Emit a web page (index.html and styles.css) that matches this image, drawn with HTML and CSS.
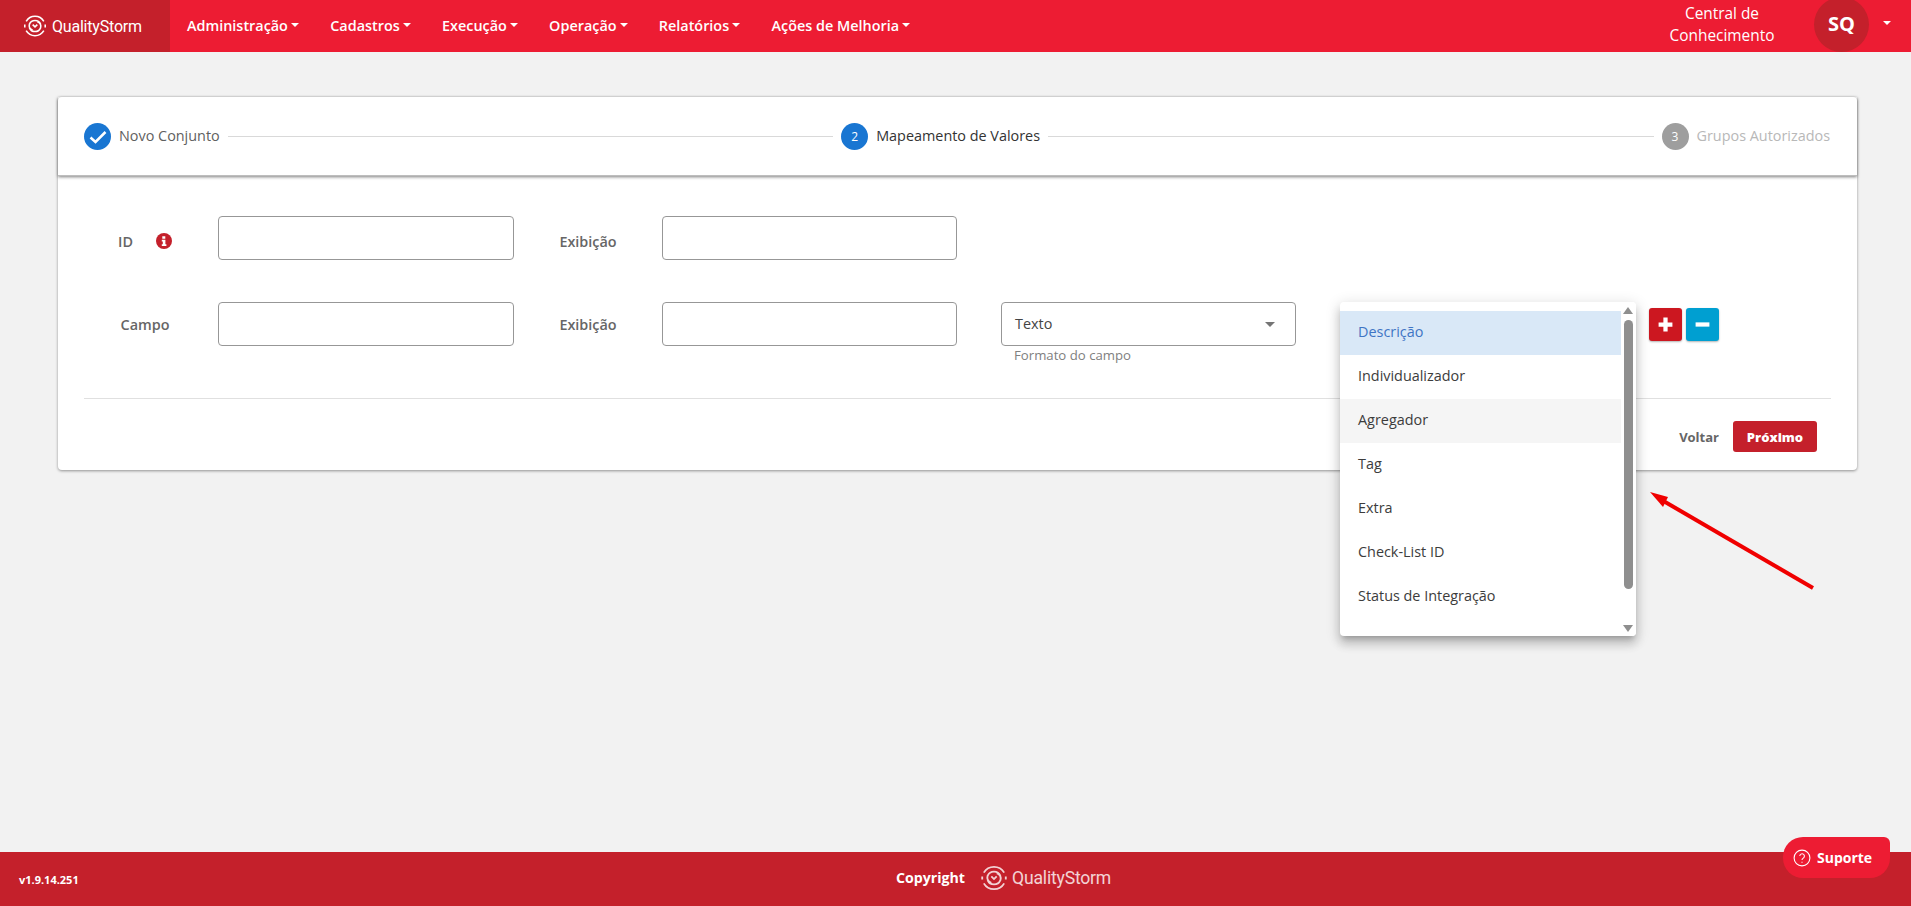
FILE: index.html
```html
<!DOCTYPE html>
<html lang="pt-BR">
<head>
<meta charset="utf-8">
<title>QualityStorm</title>
<link rel="stylesheet" href="styles.css">
</head>
<body>
<header class="topbar">
  <a class="brand">
    <svg class="logo-mark" viewBox="0 0 28 28" aria-hidden="true">
      <path d="M4.500 9A11 11 0 0 1 23.500 9M23.500 19A11 11 0 0 1 4.500 19M3 12.500v3M25 12.500v3"/>
      <path d="M20 12A6.500 6.500 0 0 0 8 12c-.8 3 .8 5.500 3.500 6.500M8 16a6.500 6.500 0 0 0 12 0c.8-3-.8-5.500-3.500-6.500"/>
      <path d="M11.500 12.500l2.500 2.500 2.500-2.500"/>
    </svg>
    <span class="logo-text">QualityStorm</span>
  </a>
  <nav class="menu">
    <a class="menu-item">Administração<i class="caret"></i></a>
    <a class="menu-item">Cadastros<i class="caret"></i></a>
    <a class="menu-item">Execução<i class="caret"></i></a>
    <a class="menu-item">Operação<i class="caret"></i></a>
    <a class="menu-item">Relatórios<i class="caret"></i></a>
    <a class="menu-item">Ações de Melhoria<i class="caret"></i></a>
  </nav>
  <div class="top-right">
    <a class="knowledge">Central de<br>Conhecimento</a>
    <div class="avatar">SQ</div>
    <i class="caret user-caret"></i>
  </div>
</header>

<main class="content">
  <section class="card">
    <div class="stepper">
      <div class="step">
        <span class="dot dot-active">
          <svg class="check" viewBox="0 0 18 18" aria-hidden="true"><path d="M1.500 9.500l5 4.500L16.500 4"/></svg>
        </span>
        <span class="step-label">Novo Conjunto</span>
      </div>
      <div class="step-line"></div>
      <div class="step">
        <span class="dot dot-active">2</span>
        <span class="step-label step-current">Mapeamento de Valores</span>
      </div>
      <div class="step-line"></div>
      <div class="step">
        <span class="dot dot-off">3</span>
        <span class="step-label step-disabled">Grupos Autorizados</span>
      </div>
    </div>

    <div class="form-area">
      <div class="form-row form-row-one">
        <div class="label label-first">ID
          <svg class="info" viewBox="0 0 16 16" aria-hidden="true">
            <circle cx="8" cy="8" r="8"/>
            <path class="info-i" d="M6.300 3.300h3v2.400h-3zM5.800 6.800h3.600v4.400h1v1.700H5.800v-1.700h1V8.500h-1z"/>
          </svg>
        </div>
        <input class="text-input input-wide" type="text">
        <div class="label label-second">Exibição</div>
        <input class="text-input" type="text">
      </div>

      <div class="form-row form-row-two">
        <div class="label label-first">Campo</div>
        <input class="text-input input-wide" type="text">
        <div class="label label-second">Exibição</div>
        <input class="text-input" type="text">
        <div class="select-wrap">
          <div class="select-box">
            <span class="select-value">Texto</span>
            <i class="select-arrow"></i>
          </div>
          <div class="hint">Formato do campo</div>
        </div>
        <div class="select-host">
          <div class="panel">
            <ul class="options">
              <li class="option option-selected">Descrição</li>
              <li class="option">Individualizador</li>
              <li class="option option-hover">Agregador</li>
              <li class="option">Tag</li>
              <li class="option">Extra</li>
              <li class="option">Check-List ID</li>
              <li class="option">Status de Integração</li>
              <li class="option">Valor</li>
            </ul>
            <div class="scrollbar">
              <i class="sb-up"></i>
              <div class="sb-thumb"></div>
              <i class="sb-down"></i>
            </div>
          </div>
        </div>
        <div class="row-actions">
          <button class="square-btn btn-add" type="button" aria-label="Adicionar">
            <svg viewBox="0 0 16 16" aria-hidden="true"><path d="M6 1.500h4V6h4.500v4H10v4.500H6V10H1.500V6H6z"/></svg>
          </button>
          <button class="square-btn btn-remove" type="button" aria-label="Remover">
            <svg viewBox="0 0 16 16" aria-hidden="true"><path d="M1.500 6h13v4h-13z"/></svg>
          </button>
        </div>
      </div>

      <hr class="divider">

      <div class="actions">
        <button class="link-btn" type="button">Voltar</button>
        <button class="primary-btn" type="button">Próximo</button>
      </div>
    </div>
  </section>
</main>

<footer class="footer">
  <span class="version">v1.9.14.251</span>
  <div class="copyright">
    <span>Copyright</span>
    <svg class="logo-mark foot-mark" viewBox="0 0 28 28" aria-hidden="true">
      <path d="M4.500 9A11 11 0 0 1 23.500 9M23.500 19A11 11 0 0 1 4.500 19M3 12.500v3M25 12.500v3"/>
      <path d="M20 12A6.500 6.500 0 0 0 8 12c-.8 3 .8 5.500 3.500 6.500M8 16a6.500 6.500 0 0 0 12 0c.8-3-.8-5.500-3.500-6.500"/>
      <path d="M11.500 12.500l2.500 2.500 2.500-2.500"/>
    </svg>
    <span class="logo-text foot-logo">QualityStorm</span>
  </div>
</footer>

<a class="support">
  <svg viewBox="0 0 18 18" aria-hidden="true">
    <circle cx="9" cy="9" r="7.900"/>
    <path d="M6.800 7.100a2.300 2.300 0 1 1 3.500 2c-.8.500-1.300 1-1.300 2"/>
    <path d="M9 12.800v1"/>
  </svg>
  Suporte
</a>

<svg class="annotation" viewBox="0 0 180 110" aria-hidden="true">
  <path class="annotation-line" d="M165 98 12 9"/>
  <path class="annotation-head" d="M2 2 20 7 15 17z"/>
</svg>
</body>
</html>
```

FILE: styles.css
```css
* { box-sizing: border-box; }

html, body { height: 100%; }

body {
  margin: 0;
  display: flex;
  flex-direction: column;
  background: #f2f2f2;
  color: #555;
  font-family: "Open Sans", "Noto Sans", sans-serif;
  font-size: 14.4px;
  overflow: hidden;
}

/* top bar */
.topbar {
  flex: 0 0 52px;
  height: 52px;
  display: flex;
  align-items: stretch;
  background: #ed1c33;
  color: #fff;
  overflow: hidden;
}

.brand {
  flex: 0 0 170px;
  display: flex;
  align-items: center;
  gap: 4px;
  padding-left: 22px;
  background: #c4202b;
}

.logo-mark {
  width: 26px;
  height: 26px;
  fill: none;
  stroke: #fff;
  stroke-width: 1.700;
  flex: none;
}

.logo-text {
  font-family: Roboto, "Open Sans", sans-serif;
  font-weight: 400;
  font-size: 16px;
  letter-spacing: -.2px;
  color: #fff;
  white-space: nowrap;
}

.menu {
  display: flex;
  align-items: center;
  padding-left: 17px;
  gap: 31.300px;
}

.menu-item {
  display: flex;
  align-items: center;
  font-weight: 600;
  font-size: 14.4px;
  color: #fff;
  white-space: nowrap;
  position: relative;
  top: -1px;
}

.caret {
  display: inline-block;
  width: 0;
  height: 0;
  margin-left: 3px;
  border-top: 4px solid #fff;
  border-left: 4px solid transparent;
  border-right: 4px solid transparent;
}

.top-right {
  margin-left: auto;
  display: flex;
  align-items: center;
}

.knowledge {
  width: 120px;
  text-align: center;
  font-size: 15.400px;
  line-height: 22px;
  color: #fff;
  margin-right: 32px;
  position: relative;
  top: -1px;
}

.avatar {
  width: 55px;
  height: 55px;
  align-self: flex-start;
  margin-top: -3px;
  padding-bottom: 2px;
  border-radius: 50%;
  background: #c4202b;
  color: #fff;
  font-weight: 700;
  font-size: 20px;
  display: flex;
  align-items: center;
  justify-content: center;
}

.user-caret {
  margin-left: 14px;
  margin-right: 20px;
  position: relative;
  top: -3px;
}

/* page */
.content {
  flex: 1 1 auto;
  padding: 45px 54px 0 58px;
}

.card {
  height: 373px;
  background: #fff;
  border-radius: 4px;
  box-shadow: 0 1px 3px rgba(0, 0, 0, .4);
}

.stepper {
  height: 79px;
  display: flex;
  align-items: center;
  padding: 1px 27px 0 26px;
  gap: 8px;
  box-shadow: 0 1px 3px rgba(0, 0, 0, .5);
  border-bottom: 1px solid #bdbdbd;
  position: relative;
}

.step {
  display: flex;
  align-items: center;
  gap: 8px;
  white-space: nowrap;
}

.dot {
  width: 27px;
  height: 27px;
  border-radius: 50%;
  display: flex;
  align-items: center;
  justify-content: center;
  color: #fff;
  font-size: 12px;
}

.dot-active { background: #1976d2; }
.dot-off { background: #9e9e9e; }

.check {
  width: 18px;
  height: 18px;
  fill: none;
  stroke: #fff;
  stroke-width: 2.500;
}

.step-label { color: #5f5f5f; font-size: 14.4px; padding-bottom: 2px; }
.step-current { color: #333; }
.step-disabled { color: #b8b8b8; }

.step-line {
  flex: 1 1 auto;
  height: 1px;
  background: #d9d9d9;
}

.form-area {
  padding: 40px 26px 0;
}

.form-row {
  display: flex;
  align-items: flex-start;
}

.form-row-one .label { padding-top: 7px; }
.form-row-two { margin-top: 42px; }

.label {
  height: 44px;
  display: flex;
  align-items: center;
  justify-content: center;
  font-weight: 600;
  font-size: 14.4px;
  color: #666;
}

.label-first { width: 122px; margin-right: 12px; }
.label-second { width: 148px; }

.info {
  width: 16px;
  height: 16px;
  margin-left: 23px;
  margin-top: -2px;
  fill: #c4202b;
}

.info-i { fill: #fff; }

.text-input {
  width: 295px;
  height: 44px;
  padding: 0 13px;
  border: 1px solid #979797;
  border-radius: 4px;
  background: #fff;
  font: inherit;
}

.input-wide { width: 296px; }

.select-wrap { width: 295px; margin-left: 44px; }

.select-box {
  height: 44px;
  display: flex;
  align-items: center;
  justify-content: space-between;
  padding: 0 20px 0 13px;
  border: 1px solid #979797;
  border-radius: 4px;
  font-size: 14.4px;
  color: #444;
}

.select-value { padding-bottom: 2px; }

.select-arrow {
  width: 0;
  height: 0;
  border-top: 5px solid #757575;
  border-left: 5px solid transparent;
  border-right: 5px solid transparent;
}

.hint {
  margin: 1px 0 0 13px;
  font-size: 13.200px;
  line-height: 16px;
  color: #808080;
}

/* open dropdown */
.select-host {
  width: 296px;
  margin-left: 44px;
  position: relative;
  height: 44px;
}

.panel {
  position: absolute;
  top: 0;
  left: 0;
  z-index: 5;
  width: 296px;
  height: 334px;
  display: flex;
  background: #fff;
  border-radius: 4px;
  overflow: hidden;
  box-shadow: 0 5px 5px -3px rgba(0, 0, 0, .2), 0 8px 10px 1px rgba(0, 0, 0, .14), 0 3px 14px 2px rgba(0, 0, 0, .12);
}

.options {
  flex: 1 1 auto;
  margin: 0;
  padding: 9px 0 0;
  list-style: none;
}

.option {
  height: 44px;
  line-height: 42px;
  padding-left: 18px;
  font-size: 14.4px;
  color: #3c3c3c;
}

.option:last-child { line-height: 46px; }

.option-selected { background: #d9e8f7; color: #3f75c4; }
.option-hover { background: #f5f5f5; }

.scrollbar {
  flex: 0 0 15px;
  display: flex;
  flex-direction: column;
  align-items: center;
  padding: 5px 3px 4px 2px;
  background: #fff;
}

.sb-up, .sb-down {
  width: 0;
  height: 0;
  border-left: 5px solid transparent;
  border-right: 5px solid transparent;
}

.sb-up { border-bottom: 7px solid #8f8f8f; }
.sb-down { border-top: 7px solid #8f8f8f; margin-top: auto; }

.sb-thumb {
  width: 9px;
  height: 269px;
  margin-top: 6px;
  background: #8f8f8f;
  border-radius: 5px;
}

.row-actions {
  display: flex;
  gap: 4px;
  margin: 6px 0 0 13px;
}

.square-btn {
  width: 33px;
  height: 33px;
  padding: 0;
  border: 0;
  border-radius: 3px;
  display: flex;
  align-items: center;
  justify-content: center;
  box-shadow: 0 1px 2px rgba(0, 0, 0, .3);
}

.square-btn svg {
  width: 17px;
  height: 17px;
  fill: #fff;
}

.btn-add { background: #cc1720; }
.btn-remove { background: #009fd1; }

.divider {
  height: 1px;
  margin: 35px 0 0;
  border: 0;
  background: #e0e0e0;
}

.actions {
  display: flex;
  align-items: center;
  justify-content: flex-end;
  gap: 14px;
  padding: 22px 14px 0 0;
}

.link-btn {
  padding: 0;
  border: 0;
  background: none;
  font: 700 13px "Open Sans", sans-serif;
  color: #666;
}

.primary-btn {
  width: 84px;
  height: 31px;
  padding: 0;
  border: 0;
  border-radius: 3px;
  background: #c4202b;
  color: #fff;
  font: 800 13px "Open Sans", sans-serif;
}

/* footer */
.footer {
  flex: 0 0 54px;
  height: 54px;
  display: grid;
  grid-template-columns: 1fr auto 1fr;
  align-items: center;
  padding-left: 19px;
  background: #c4202b;
  color: #fff;
}

.version {
  font-size: 11px;
  font-weight: 700;
}

.copyright {
  display: flex;
  align-items: center;
  font-size: 14.200px;
  font-weight: 700;
  padding: 0 0 3px 77px;
}

.foot-mark {
  width: 30px;
  height: 30px;
  margin-left: 14px;
  margin-right: 3px;
  opacity: .8;
}

.foot-logo {
  font-size: 17.600px;
  opacity: .8;
}

.support {
  position: fixed;
  left: 1783px;
  top: 837px;
  width: 107px;
  height: 41px;
  display: flex;
  align-items: center;
  gap: 6px;
  padding-left: 10px;
  border-radius: 20px 6px 20px 20px;
  background: #ed1c33;
  color: #fff;
  font-weight: 700;
  font-size: 14px;
}

.support svg {
  width: 18px;
  height: 18px;
  fill: none;
  stroke: #fff;
  stroke-width: 1.100;
  flex: none;
}

/* red arrow annotation drawn over the screenshot */
.annotation {
  position: fixed;
  left: 1648px;
  top: 490px;
  width: 180px;
  height: 110px;
  z-index: 6;
}

.annotation-line {
  fill: none;
  stroke: #f00000;
  stroke-width: 4;
}

.annotation-head { fill: #f00000; }
```
